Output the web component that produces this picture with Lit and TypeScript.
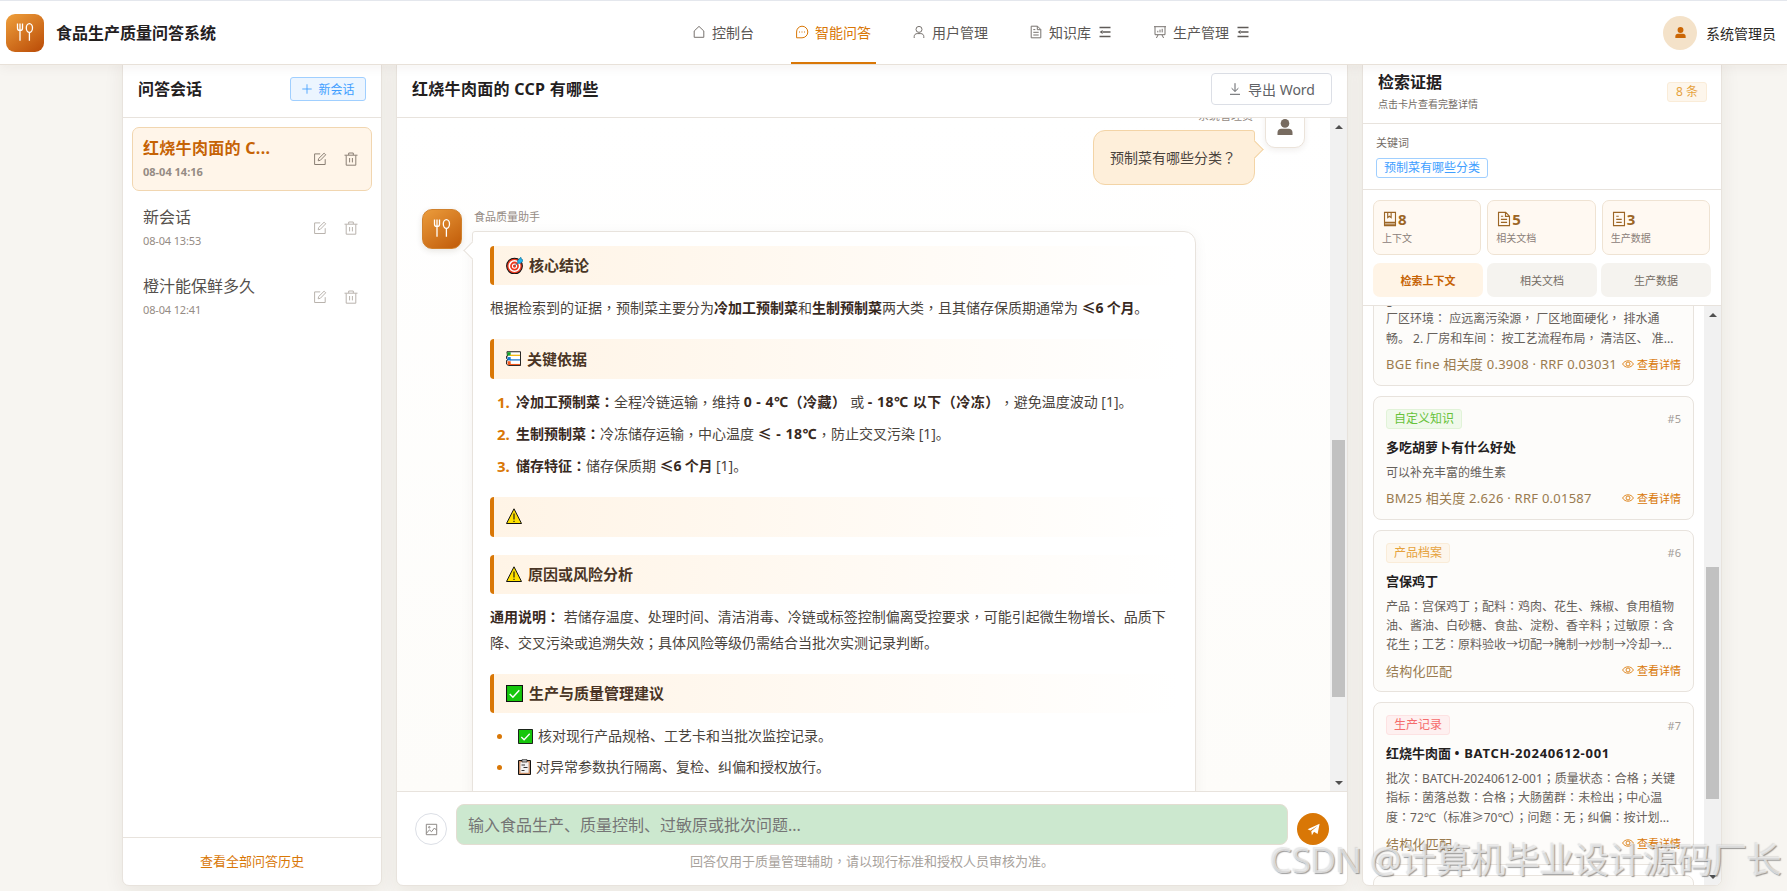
import { LitElement, html, css, svg, nothing } from "lit";
import { customElement, property } from "lit/decorators.js";

/* Fullwidth comma, colon, semicolon and question mark sit in the middle of their cell. */
const t = (s: string) =>
  s.split(/([，：；？])/).map((p) => (/^[，：；？]$/.test(p) ? html`<span class="mid">${p}</span>` : p));

const ICONS: Record<string, unknown> = {
  home: svg`<path d="M2.200 12.300V6L7 1.400 11.800 6v6.300z"/>`,
  chat: svg`<path d="M7 1.200a5.800 5.800 0 0 1 0 11.600H1.600V7A5.600 5.600 0 0 1 7 1.200z"/><path d="M4 7h1M6.500 7h1M9 7h1"/>`,
  user: svg`<circle cx="7" cy="4.400" r="3"/><path d="M2.200 13v-1.400c0-2 1.400-3 3-3h3.600c1.600 0 3 1 3 3V13"/>`,
  doc: svg`<path d="M2.200 1.200h6.300l3.300 3.300v8.300H2.200zM8.300 1.300v3.400h3.400M4.300 4.600h2M4.300 7.300h5.400M4.300 10h5.400"/>`,
  list: svg`<path d="M2.200 1.200h9.600v11.600H2.200zM4.600 4.600h2.200M4.600 7.300h4.800M4.600 10h4.800"/>`,
  board: svg`<path d="M1 1.700h12M2 1.700v8h10v-8M5 10l-1.600 3M9 10l1.600 3M4.800 7.400V5.800M7 7.400V4.600M9.200 7.400V3.800"/>`,
  book: svg`<path d="M2.200 1.200h9.600v11.600H2.200zM2.200 10h9.600M5 1.400v4.400l1.500-1.200L8 5.800V1.400M2.200 11.500h9.600"/>`,
  plus: svg`<path d="M7 1.500v11M1.500 7h11"/>`,
  edit: svg`<path d="M7.200 1.900H1.600v10.600h10.600V7.200M5.200 8.800l.4-2.200 5.500-5.400 1.600 1.600-5.400 5.500z"/>`,
  trash: svg`<path d="M.5 3.200h13M4.700 3V1h4.600v2M2.200 3.400v9.800h9.600V3.400M5.600 6v4.400M8.400 6v4.400"/>`,
  download: svg`<path d="M7 1.200v8M3.600 6.200 7 9.500l3.400-3.300M2 12.300h10"/>`,
  image: svg`<path d="M1.400 1.400h11.200v11.200H1.400zM1.600 11l3.200-3.600 2.200 2 3.200-4 2.200 2.400"/><circle cx="4.600" cy="4.600" r=".8"/>`,
  eye: svg`<path d="M.7 7C3.500 2 10.500 2 13.300 7 10.500 12 3.500 12 .7 7z"/><circle cx="7" cy="7" r="2.300"/>`,
};

const icon = (name: string, size = 14, w = 1) =>
  html`<svg class="ic" width=${size} height=${size} viewBox="0 0 14 14" fill="none" stroke="currentColor" stroke-width=${w}>${ICONS[name]}</svg>`;

const menuGlyph = html`<svg class="ic menu" width="14" height="14" viewBox="0 0 14 14" fill="none" stroke="currentColor" stroke-width="1.600"><path d="M1.500 2.500h11M5 7h7.500M1.500 11.500h11"/><path d="M4.600 5v4L1.600 7z" fill="currentColor" stroke="none"/></svg>`;

const cutlery = (size: number) => html`<svg width=${size} height=${size} viewBox="0 0 18 18" fill="none" stroke="#fff" stroke-width="1.300"><path d="M1.500 0.500v4.700c0 1.600.8 2.200 2.500 2.200s2.500-.6 2.500-2.200V.5M4 .5v17.300M13.400 9.400v8.400"/><ellipse cx="13.400" cy="5" rx="3.100" ry="4.300"/></svg>`;

const personFill = (size: number) => html`<svg width=${size} height=${size} viewBox="0 0 16 16" fill="currentColor"><circle cx="8" cy="4.400" r="4.300"/><path d="M.5 16v-2.200c0-2.600 1.500-4 3.800-4h7.400c2.300 0 3.800 1.400 3.800 4V16z"/></svg>`;

const EMOJI: Record<string, unknown> = {
  target: svg`<circle cx="8" cy="8.500" r="7.400" fill="#ee3a1f" stroke="#111"/><circle cx="8" cy="8.500" r="4.900" fill="none" stroke="#fff" stroke-width="1.500"/><circle cx="8" cy="8.500" r="2" fill="#ee3a1f" stroke="#fff"/><path d="M8 8.500l3-3V3.200L14 .3l.6 2 2 .6-2.900 3H11" fill="#1fb6f0" stroke="#136f9a" stroke-width=".7"/>`,
  books: svg`<path d="M1 .8h14.500V15.500H2.500L.6 14V10l1.500-.5L.6 8V5.500h1z" fill="#fff" stroke="#111"/><path d="M1.500 1.300H5v3.700H1.500z" fill="#12a52a"/><path d="M4 4.600h11" stroke="#f5b400" stroke-width="1.300"/><path d="M1.500 6.500H5V10H1.500z" fill="#1277cf"/><path d="M4 9.500h11" stroke="#1277cf" stroke-width="1.300"/><path d="M1.500 11H5v4H2z" fill="#f3571b"/><path d="M4 14.400h11" stroke="#f3571b" stroke-width="1.200"/>`,
  warn: svg`<path d="M8 .8 15.500 15.500H.5z" fill="#ffe100" stroke="#111"/><path d="M8 5.500v6M8 12.800v1.200" stroke="#111" stroke-width="1.100"/>`,
  check: svg`<path d="M.5.500h15v15H.5z" fill="#16c60c" stroke="#111"/><path d="M3.500 8.500l3 3 6-6.500" fill="none" stroke="#fff" stroke-width="1.400"/>`,
  clip: svg`<path d="M.5 1.500h12v14h-12z" fill="#c98f68" stroke="#111"/><path d="M2.400 3.200h8.200v10.600H2.400z" fill="#f3f3f3"/><path d="M4 .6h5v2.400H4z" fill="#bbb" stroke="#111" stroke-width=".6"/><path d="M3.500 6h3.500M5.500 8.500H9.500M3.500 11.500h3" stroke="#333"/>`,
};
const emoji = (n: string, w = 17, h = 17) =>
  html`<svg class="em" width=${w} height=${h} viewBox="0 0 ${n === "clip" ? 13 : 16} 16" fill="none">${EMOJI[n]}</svg>`;

const base = css`
  * { box-sizing: border-box; }
  :host { font-family: "Noto Sans", "Noto Sans CJK SC", sans-serif; }
  .mid { font-family: "Noto Sans CJK TC", "Noto Sans CJK SC", sans-serif; line-height: 0; }
  svg { display: block; flex: none; }
`;

@customElement("scroll-rail")
class ScrollRail extends LitElement {
  @property({ type: Number }) before = 0;
  @property({ type: Number }) thumb = 0;
  static styles = css`
    :host { flex: none; width: 17px; background: #f1f1f1; display: flex; flex-direction: column; align-items: center; }
    .btn { height: 17px; flex: none; display: grid; place-items: center; }
    .gap { flex: none; }
    .thumb { width: 13px; background: #c1c1c1; flex: none; }
    .rest { flex: 1; }
    svg { display: block; }
  `;
  render() {
    return html`
      <div class="btn"><svg width="8" height="4" viewBox="0 0 8 4" fill="#505050"><path d="M4 0l4 4H0z"/></svg></div>
      <div class="gap" style="height:${this.before}px"></div>
      <div class="thumb" style="height:${this.thumb}px"></div>
      <div class="rest"></div>
      <div class="btn"><svg width="8" height="4" viewBox="0 0 8 4" fill="#505050"><path d="M4 4l4-4H0z"/></svg></div>`;
  }
}

@customElement("top-bar")
class TopBar extends LitElement {
  static styles = [base, css`
    :host { display: flex; align-items: center; height: 65px; padding: 1px 11px 0 6px; background: #fff; border-bottom: 1px solid #e8e1d9; position: relative; z-index: 2; box-shadow: 0 2px 12px rgba(60, 40, 20, 0.06), inset 0 1px 0 #e4e7ed; }
    .logo { width: 38px; height: 38px; border-radius: 9px; background: linear-gradient(145deg, #efa03c, #b94a06); display: grid; place-items: center; padding-bottom: 2px; }
    .name { margin-left: 12px; font-size: 16px; font-weight: 700; color: #23201e; line-height: 24px; width: 623px; }
    nav { display: flex; gap: 32px; align-self: stretch; flex: 1; margin-left: 9px; }
    .item { display: flex; align-items: center; padding: 0 5px 0 4px; gap: 6px; font-size: 14px; color: #5a5654; height: 63px; border-bottom: 2px solid transparent; white-space: nowrap; }
    .item span { margin-top: 1px; }
    .item .ic { color: #77726e; }
    .item .menu { color: #5f5b58; margin-left: 1px; }
    .on, .item.on .ic { color: #d97706; }
    .on { border-bottom-color: #d97706; }
    .who { display: flex; align-items: center; gap: 9px; font-size: 14px; color: #2b2826; }
    .face { width: 34px; height: 34px; border-radius: 50%; background: #f4e2c9; color: #cb6604; display: grid; place-items: center; }
  `];
  render() {
    const items: [string, string, boolean][] = [
      ["home", "控制台", false], ["chat", "智能问答", false], ["user", "用户管理", false], ["doc", "知识库", true], ["board", "生产管理", true],
    ];
    return html`
      <div class="logo">${cutlery(18)}</div>
      <div class="name">食品生产质量问答系统</div>
      <nav>${items.map(([i, s, sub]) => html`<div class="item ${i === "chat" ? "on" : ""}">${icon(i)}<span>${s}</span>${sub ? menuGlyph : nothing}</div>`)}</nav>
      <div class="who"><div class="face">${personFill(11)}</div>系统管理员</div>`;
  }
}

@customElement("session-panel")
class SessionPanel extends LitElement {
  static styles = [base, css`
    :host { display: flex; flex-direction: column; }
    .head { height: 62px; flex: none; border-bottom: 1px solid #e8e3dd; display: flex; align-items: center; justify-content: space-between; padding: 4px 15px 0; }
    h2 { margin: 0; font-size: 16px; color: #23201e; line-height: 24px; }
    .new { width: 76px; height: 24px; border: 1px solid #a0cfff; background: #ecf5ff; color: #409eff; border-radius: 3px; font-size: 12px; display: flex; align-items: center; justify-content: center; gap: 5px; }
    .list { flex: 1; padding: 9px 9px 0; display: flex; flex-direction: column; gap: 5px; }
    .it { height: 64px; flex: none; border: 1px solid transparent; border-radius: 7px; padding: 0 13px 0 10px; display: flex; align-items: center; }
    .it.on { background: #fff5e9; border-color: #f1d6b0; font-weight: 700; }
    .tx { flex: 1; min-width: 0; padding-bottom: 2px; }
    .ti { font-size: 16px; line-height: 24px; color: #55504c; width: 136px; white-space: nowrap; }
    .on .ti { color: #c66305; letter-spacing: 0.3px; }
    .da { font-size: 11px; line-height: 16px; margin-top: 4px; color: #958b84; }
    .it:not(.on) .da { letter-spacing: -0.15px; }
    .ops { display: flex; gap: 17px; color: #b9b3ad; }
    .on .ops { color: #8a7f74; }
    .foot { height: 48px; flex: none; border-top: 1px solid #e8e3dd; color: #d97706; font-size: 13px; display: grid; place-items: center; padding-bottom: 2px; }
  `];
  render() {
    const s: [string, string][] = [["红烧牛肉面的 C...", "08-04 14:16"], ["新会话", "08-04 13:53"], ["橙汁能保鲜多久", "08-04 12:41"]];
    return html`
      <div class="head"><h2>问答会话</h2><div class="new">${icon("plus", 12)}<span>新会话</span></div></div>
      <div class="list">${s.map(([a, b], i) => html`<div class="it ${i ? "" : "on"}"><div class="tx"><div class="ti">${a}</div><div class="da">${b}</div></div><div class="ops">${icon("edit")}${icon("trash")}</div></div>`)}</div>
      <div class="foot">查看全部问答历史</div>`;
  }
}

@customElement("chat-panel")
class ChatPanel extends LitElement {
  static styles = [base, css`
    :host { display: flex; flex-direction: column; }
    .head { height: 62px; flex: none; border-bottom: 1px solid #e8e3dd; display: flex; align-items: center; justify-content: space-between; padding: 4px 15px 0; }
    h2 { margin: 0; font-size: 16px; color: #23201e; line-height: 24px; letter-spacing: 0.3px; }
    .exp { width: 121px; height: 32px; border: 1px solid #dcdfe6; border-radius: 4px; color: #606266; font-size: 14px; display: flex; align-items: center; justify-content: center; gap: 6px; }
    .mainrow { flex: 1; min-height: 0; display: flex; background: linear-gradient(180deg, #fff, #fdfcf9); }
    .body { flex: 1; min-width: 0; overflow: hidden; padding: 0 25px; }
    .me { display: flex; justify-content: flex-end; gap: 10px; height: 101px; margin-top: -10px; }
    .mecol { display: flex; flex-direction: column; align-items: flex-end; }
    .nm { font-size: 11px; line-height: 16px; color: #958b84; }
    .me .nm { margin: 0 2px 6px 0; }
    .ava { width: 40px; height: 40px; border-radius: 10px; flex: none; display: grid; place-items: center; }
    .me .ava { background: #fff; border: 1px solid #ebe3da; color: #776b60; box-shadow: 0 2px 6px rgba(60, 40, 20, 0.08); padding: 0 1px 3px 0; }
    .bot { background: linear-gradient(145deg, #eb9c3c, #c05a08); box-shadow: 0 2px 6px rgba(60, 40, 20, 0.12); padding-bottom: 2px; border: 1px solid #d0812d; }
    .q { position: relative; height: 55px; width: 162px; background: #feefda; border: 1px solid #f3d4a6; border-radius: 12px 3px 12px 12px; padding-left: 16px; line-height: 54px; font-size: 14px; color: #4a433d; }
    .q::after { content: ""; position: absolute; right: -7px; top: 12px; width: 12px; height: 12px; background: #feefda; border: 1px solid #f3d4a6; border-left: 0; border-bottom: 0; transform: rotate(45deg); }
    .ai { display: flex; gap: 10px; }
    .aicol { display: flex; flex-direction: column; width: 724px; }
    .ai .nm { margin: 0 0 6px 2px; }
    .a { position: relative; background: #fff; border: 1px solid #e8e3dd; border-radius: 3px 12px 12px 12px; height: 700px; padding: 14px 17px 0; box-shadow: 0 3px 14px rgba(60, 40, 20, 0.05); font-size: 14px; line-height: 26px; color: #4a443d; }
    .a::before { content: ""; position: absolute; left: -7px; top: 12px; width: 12px; height: 12px; background: #fff; border: 1px solid #e8e3dd; border-right: 0; border-top: 0; transform: rotate(45deg); }
    h3 { margin: 18px 0 10px; height: 39.400px; border-left: 4px solid #d97706; border-radius: 4px; background: linear-gradient(90deg, #fff4e6, #fff); padding: 0 0 1px 12px; display: flex; align-items: center; gap: 6px; font-size: 15px; color: #4a3525; }
    h3.first { margin-top: 0; }
    h3.tight { margin-bottom: 18px; }
    p { margin: 0 0 18px; }
    strong { color: #38291e; }
    .sp { letter-spacing: 0.5px; }
    .nar { letter-spacing: -0.200px; }
    ol, ul { margin: 0; padding: 0; list-style: none; }
    ol { margin-bottom: 18.500px; }
    li { display: flex; align-items: center; }
    ol li { height: 26px; margin-bottom: 6px; white-space: pre; }
    ol li:last-child { margin-bottom: 0; }
    .n { width: 19px; margin-left: 7px; color: #d97706; font-weight: 700; font-size: 15px; }
    ul li { height: 26px; margin-bottom: 5px; }
    .dot { width: 5px; height: 5px; border-radius: 50%; background: #d97706; margin: 0 16px 0 7px; }
    li .em { margin-right: 5px; }
    .foot { height: 94px; flex: none; border-top: 1px solid #e8e3dd; padding: 12px 18px 0; }
    .row { display: flex; align-items: flex-end; gap: 9px; }
    .cir { width: 32px; height: 32px; border-radius: 50%; border: 1px solid #dcdfe6; color: #85817d; display: grid; place-items: center; }
    .in { flex: 1; height: 41px; background: #cce8cf; border: 1px solid #e3ddd2; border-radius: 8px; color: #757575; font-size: 16px; line-height: 41px; padding-left: 11px; }
    .send { width: 32px; height: 32px; border-radius: 50%; background: #d97706; display: grid; place-items: center; }
    .tip { text-align: center; font-size: 13px; color: #a8a29c; line-height: 18px; margin-top: 7px; }
  `];
  render() {
    const b = (s: string, c = "") => html`<strong class=${c}>${t(s)}</strong>`;
    return html`
      <div class="head"><h2>红烧牛肉面的 CCP 有哪些</h2><div class="exp">${icon("download")}<span>导出 Word</span></div></div>
      <div class="mainrow">
        <div class="body">
          <div class="me"><div class="mecol"><div class="nm">系统管理员</div><div class="q">${t("预制菜有哪些分类？")}</div></div><div class="ava">${personFill(16)}</div></div>
          <div class="ai"><div class="ava bot">${cutlery(18)}</div>
            <div class="aicol"><div class="nm">食品质量助手</div>
              <div class="a">
                <h3 class="first">${emoji("target")}核心结论</h3>
                <p>${t("根据检索到的证据，预制菜主要分为")}${b("冷加工预制菜")}和${b("生制预制菜")}${t("两大类，且其储存保质期通常为 ")}${b("≤6 个月", "nar")}。</p>
                <h3>${emoji("books", 15, 15)}关键依据</h3>
                <ol>
                  <li><span class="n">1.</span>${b("冷加工预制菜：")}${t("全程冷链运输，维持 ")}${b("0 - 4℃（冷藏）", "sp")} 或 ${b("- 18℃ 以下（冷冻）", "sp")}${t("，避免温度波动 [1]。")}</li>
                  <li><span class="n">2.</span>${b("生制预制菜：")}${t("冷冻储存运输，中心温度 ")}${b("≤ - 18℃", "sp")}${t("，防止交叉污染 [1]。")}</li>
                  <li><span class="n">3.</span>${b("储存特征：")}储存保质期 ${b("≤6 个月", "nar")} [1]。</li>
                </ol>
                <h3 class="tight">${emoji("warn", 16, 16)}</h3>
                <h3>${emoji("warn", 16, 16)}原因或风险分析</h3>
                <p>${b("通用说明：")} ${t("若储存温度、处理时间、清洁消毒、冷链或标签控制偏离受控要求，可能引起微生物增长、品质下降、交叉污染或追溯失效；具体风险等级仍需结合当批次实测记录判断。")}</p>
                <h3>${emoji("check")}生产与质量管理建议</h3>
                <ul>
                  <li><span class="dot"></span>${emoji("check", 15, 15)}核对现行产品规格、工艺卡和当批次监控记录。</li>
                  <li><span class="dot"></span>${emoji("clip", 13, 16)}对异常参数执行隔离、复检、纠偏和授权放行。</li>
                  <li><span class="dot"></span>${emoji("check", 15, 15)}</li>
                </ul>
              </div>
            </div>
          </div>
        </div>
        <scroll-rail .before=${305} .thumb=${257}></scroll-rail>
      </div>
      <div class="foot">
        <div class="row"><div class="cir">${icon("image", 13)}</div><div class="in">输入食品生产、质量控制、过敏原或批次问题...</div>
          <div class="send"><svg width="13" height="13" viewBox="0 0 13 13" fill="#fff"><path d="M12.600.8 10.600 11 7 8.800 4.900 12.300 4.300 8.300 10.600 3 3.300 7.600.6 6.300z"/></svg></div></div>
        <div class="tip">${t("回答仅用于质量管理辅助，请以现行标准和授权人员审核为准。")}</div>
      </div>`;
  }
}

type Ev = { tag?: string; kind?: string; no?: string; title?: string; code?: string; lines: string[]; meta: string };

@customElement("evidence-panel")
class EvidencePanel extends LitElement {
  static styles = [base, css`
    :host { display: flex; flex-direction: column; }
    .head { height: 68px; flex: none; border-bottom: 1px solid #e8e3dd; display: flex; justify-content: space-between; padding: 14px 14px 0 15px; }
    h2 { margin: 0; font-size: 16px; color: #23201e; line-height: 24px; }
    .sub { font-size: 10px; line-height: 14px; color: #746c66; margin-top: 3px; }
    .cnt { height: 20px; padding: 0 8px; border: 1px solid #faecd8; background: #fdf6ec; color: #e6a23c; border-radius: 3px; font-size: 12px; line-height: 18px; margin-top: 12px; }
    .kw { height: 66px; flex: none; border-bottom: 1px solid #e8e3dd; padding: 11px 13px 0; }
    .lab { font-size: 11px; line-height: 16px; color: #746c66; }
    .chip { display: inline-block; margin-top: 7px; height: 20px; border: 1px solid #a0cfff; border-radius: 3px; color: #409eff; font-size: 12px; line-height: 18px; padding: 0 7px; vertical-align: top; }
    .stats { display: grid; grid-template-columns: repeat(3, 1fr); gap: 6px; padding: 10px 11px 0 10px; flex: none; }
    .st { height: 55px; background: #fff9f2; border: 1px solid #efe3d3; border-radius: 7px; padding: 9px 8px 0; }
    .num { display: flex; align-items: center; gap: 0; font-size: 15px; font-weight: 700; line-height: 18px; color: #9c6626; }
    .sl { font-size: 10px; line-height: 14px; color: #8b8079; margin-top: 3px; }
    .tabs { display: grid; grid-template-columns: repeat(3, 1fr); gap: 4px; padding: 8px 10px; height: 51px; flex: none; border-bottom: 1px solid #e8e3dd; }
    .tab { background: #f5f3ef; border-radius: 7px; display: grid; place-items: center; font-size: 11px; color: #746c64; padding-bottom: 1px; }
    .tab.on { background: #fff4e6; color: #c66305; font-weight: 700; }
    .wrap { flex: 1; min-height: 0; display: flex; }
    .list { flex: 1; min-width: 0; overflow: hidden; padding: 0 10px; }
    .inner { display: flex; flex-direction: column; gap: 9.700px; margin-top: -83px; }
    .card { flex: none; border: 1px solid #e8e3dd; border-radius: 8px; background: #fdfcfa; padding: 12px 12px 11px; }
    .top { display: flex; justify-content: space-between; align-items: center; height: 20px; }
    .tag { height: 20px; border: 1px solid; border-radius: 3px; font-size: 12px; line-height: 18px; padding: 0 7px; }
    .g { color: #67c23a; background: #f0f9eb; border-color: #e1f3d8; }
    .o { color: #e6a23c; background: #fdf6ec; border-color: #faecd8; }
    .r { color: #f56c6c; background: #fef0f0; border-color: #fde2e2; }
    .no { font-size: 11px; color: #a39d98; }
    .tt { margin-top: 8px; font-size: 13px; line-height: 20px; height: 20px; font-weight: 700; color: #23201e; white-space: nowrap; }
    .code { letter-spacing: 0.750px; }
    .tx { margin-top: 6px; font-size: 12px; line-height: 19.300px; color: #66605b; white-space: pre; }
    .ln { height: 19.300px; }
    .mt { margin-top: 6px; height: 20px; display: flex; align-items: center; justify-content: space-between; font-size: 13px; color: #9a7b4f; white-space: nowrap; letter-spacing: 0.250px; }
    .lk { display: flex; align-items: center; gap: 3px; font-size: 11px; color: #d97706; letter-spacing: 0; }
  `];
  render() {
    const cards: Ev[] = [
      { lines: ["g", "厂区环境： 应远离污染源， 厂区地面硬化， 排水通", "畅。 2. 厂房和车间： 按工艺流程布局， 清洁区、 准..."], meta: "BGE fine 相关度 0.3908 · RRF 0.03031" },
      { tag: "自定义知识", kind: "g", no: "#5", title: "多吃胡萝卜有什么好处", lines: ["可以补充丰富的维生素"], meta: "BM25 相关度 2.626 · RRF 0.01587" },
      { tag: "产品档案", kind: "o", no: "#6", title: "宫保鸡丁", lines: ["产品：宫保鸡丁；配料：鸡肉、花生、辣椒、食用植物", "油、酱油、白砂糖、食盐、淀粉、香辛料；过敏原：含", "花生；工艺：原料验收→切配→腌制→炒制→冷却→..."], meta: "结构化匹配" },
      { tag: "生产记录", kind: "r", no: "#7", title: "红烧牛肉面 ", code: "• BATCH-20240612-001", lines: ["批次：BATCH-20240612-001；质量状态：合格；关键", "指标：菌落总数：合格；大肠菌群：未检出；中心温", "度：72℃（标准≥70℃）；问题：无；纠偏：按计划..."], meta: "结构化匹配" },
      { lines: [""], meta: "" },
    ];
    const stats: [string, string, string][] = [["book", "8", "上下文"], ["doc", "5", "相关文档"], ["list", "3", "生产数据"]];
    return html`
      <div class="head"><div><h2>检索证据</h2><div class="sub">点击卡片查看完整详情</div></div><div class="cnt">8 条</div></div>
      <div class="kw"><div class="lab">关键词</div><div class="chip">预制菜有哪些分类</div></div>
      <div class="stats">${stats.map(([i, n, l]) => html`<div class="st"><div class="num">${icon(i, 16, 1)}${n}</div><div class="sl">${l}</div></div>`)}</div>
      <div class="tabs"><div class="tab on">检索上下文</div><div class="tab">相关文档</div><div class="tab">生产数据</div></div>
      <div class="wrap">
        <div class="list"><div class="inner">${cards.map((c) => html`<div class="card">
          <div class="top">${c.tag ? html`<span class="tag ${c.kind}">${c.tag}</span><span class="no">${c.no}</span>` : nothing}</div>
          <div class="tt">${c.title ?? ""}${c.code ? html`<span class="code">${c.code}</span>` : nothing}</div>
          <div class="tx">${c.lines.map((l) => html`<div class="ln">${t(l)}</div>`)}</div>
          <div class="mt">${c.meta ? html`<span>${c.meta}</span><span class="lk">${icon("eye", 12)}查看详情</span>` : nothing}</div>
        </div>`)}</div></div>
        <scroll-rail .before=${244} .thumb=${232}></scroll-rail>
      </div>`;
  }
}

@customElement("app-root")
class AppRoot extends LitElement {
  static styles = [base, css`
    :host { display: block; position: relative; height: 891px; width: 1787px; overflow: hidden; background: #f7f5f1; }
    .cols { display: grid; grid-template-columns: 260px 952px 360px; gap: 14px; padding-left: 122px; margin-top: -10px; height: 831px; }
    .cols > * { background: #fff; border: 1px solid #e8e3dd; border-radius: 7px; overflow: hidden; box-shadow: 0 6px 20px rgba(60, 40, 20, 0.07); min-height: 0; }
    .mark { position: absolute; left: 1270px; top: 835px; font-size: 35px; line-height: 50px; letter-spacing: -0.450px; color: rgba(238, 238, 238, 0.75); text-shadow: 1px 1px 1px rgba(60, 60, 60, 0.5), -1px -1px 1px rgba(160, 160, 160, 0.25); white-space: nowrap; z-index: 5; }
  `];
  render() {
    return html`
      <top-bar></top-bar>
      <div class="cols"><session-panel></session-panel><chat-panel></chat-panel><evidence-panel></evidence-panel></div>
      <div class="mark">CSDN @计算机毕业设计源码厂长</div>`;
  }
}
